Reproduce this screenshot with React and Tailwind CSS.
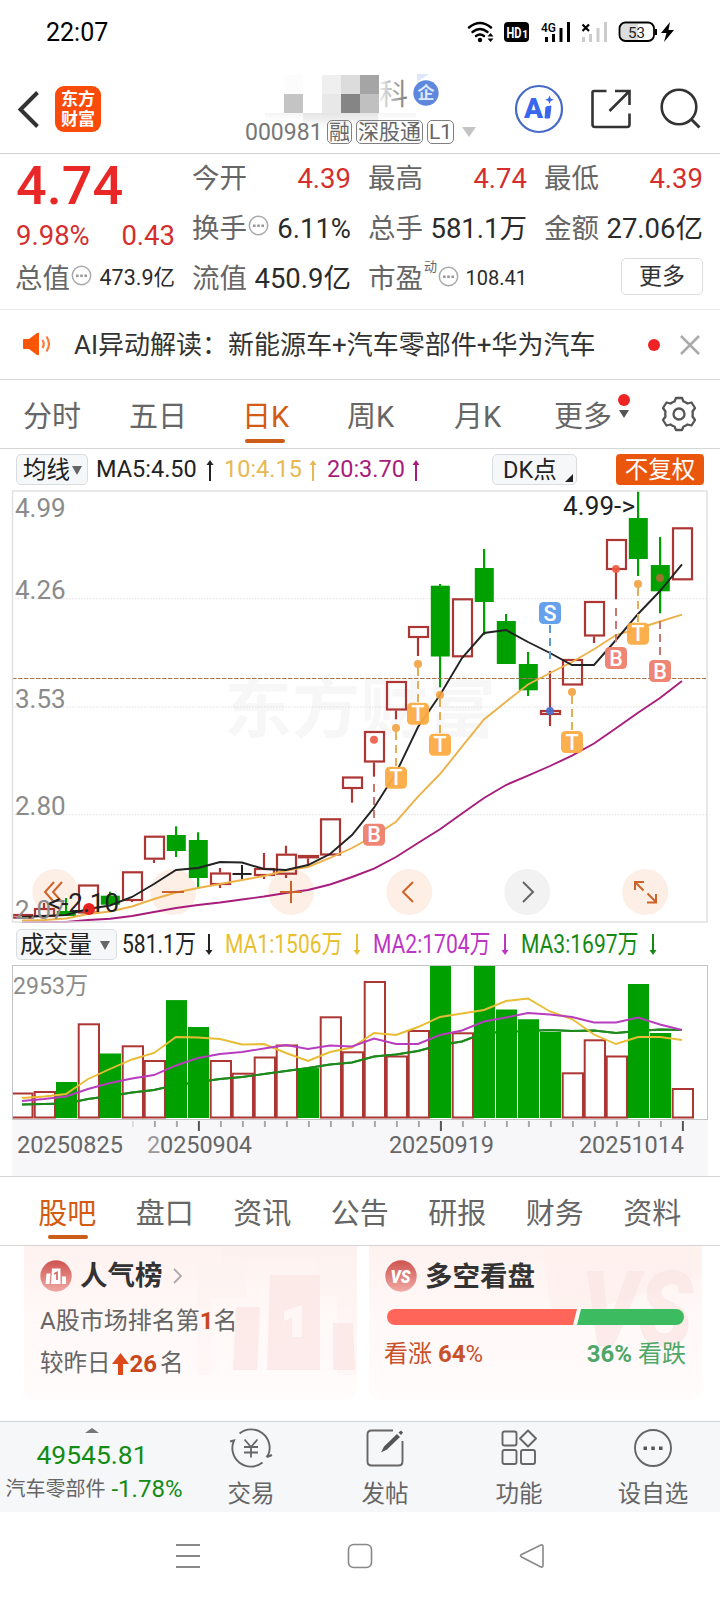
const UP = '#ac3633'
const DOWN = '#00a000'

const x = (i) => 22 + i * 22
const toPoints = (pts) => pts.map(([i, y]) => `${x(i)},${y}`).join(' ')

// [kind, body top, body bottom, wick top, wick bottom]
const CANDLES = [
  ['up', 914, 918.7, 914, 918.7], ['up', 908, 917, 903, 917], ['down', 911, 916, 898, 916],
  ['up', 884.5, 913.5, 884.5, 913.5], ['down', 895.7, 904.7, 891.7, 904.7], ['up', 871.3, 901, 871.3, 902],
  ['up', 835.7, 859.7, 835.7, 863], ['down', 835, 851, 826.3, 857], ['down', 840, 878, 832.3, 888],
  ['up', 872.5, 885, 868, 888], ['flat', 874, 874, 865, 879], ['up', 868, 876, 853, 879],
  ['up', 853.7, 874.7, 845.7, 878], ['up', 855, 858.3, 855, 865.7], ['up', 818.3, 855.5, 818.3, 855.5],
  ['up', 776.5, 789, 776.5, 802.7], ['up', 731, 762.5, 731, 776.7], ['up', 681, 710.5, 681, 719.3],
  ['up', 626, 638, 626, 656], ['down', 585.7, 656.5, 584, 687.3], ['up', 598.3, 657.3, 598.3, 657.3],
  ['down', 568, 602, 549, 635], ['down', 621, 664, 614, 664], ['down', 664, 690.3, 652, 696],
  ['up', 710, 715, 671, 726], ['up', 659, 685.5, 659, 685.5], ['up', 601, 636.5, 601, 643],
  ['up', 539, 570, 539, 599.3], ['down', 518, 559, 491, 576], ['down', 565, 591.3, 537, 613.3],
  ['up', 527.3, 580.3, 527.3, 580.3],
]

const MA5 = [[0, 917], [1, 916], [2, 915], [3, 909], [4, 905.5], [5, 897], [6, 884], [7, 870], [8, 868], [9, 862], [10, 862.5], [11, 869], [12, 870], [13, 865], [14, 854], [15, 835], [16, 807.7], [17, 773], [18, 727], [19, 695], [20, 658], [21, 633], [22, 630], [23, 642], [24, 653], [25, 665], [26, 665], [27, 640], [28, 614], [29, 591], [30, 564.3]]
const MA10 = [[0, 920.5], [1, 920], [2, 918.5], [3, 914], [4, 911.5], [5, 906.5], [6, 899], [7, 892.5], [8, 888], [9, 884], [10, 880], [11, 876], [12, 870.5], [13, 867], [14, 858], [15, 848], [16, 836], [17, 821.7], [18, 796.7], [19, 774], [20, 746.7], [21, 719.5], [22, 701.7], [23, 684.5], [24, 673], [25, 662], [26, 649.3], [27, 635], [28, 628.5], [29, 621.5], [30, 614.7]]
const MA20 = [[0, 922], [2, 922], [3, 920], [4, 918.7], [5, 916], [6, 912], [7, 908], [8, 905], [9, 902.5], [10, 899.5], [11, 896.5], [12, 893], [13, 890], [14, 884.5], [15, 877], [16, 868.7], [17, 857], [18, 843], [19, 829.3], [20, 813.5], [21, 798], [22, 785], [23, 775.7], [24, 766], [25, 755.7], [26, 743.5], [27, 728.3], [28, 712.7], [29, 698], [30, 681]]

// dot is the candle mark, from/to the dashed leader, y the badge centre
const SIGNALS = [
  { i: 16, t: 'B', dot: 739.7, from: 784, to: 823, y: 834.7 },
  { i: 17, t: 'T', dot: 728, from: 732, to: 766, y: 777.7 },
  { i: 18, t: 'T', dot: 664, from: 668, to: 702, y: 713.7 },
  { i: 19, t: 'T', dot: 695, from: 699, to: 733, y: 744.7 },
  { i: 24, t: 'S', dot: 711, from: 625, to: 663, y: 613 },
  { i: 25, t: 'T', dot: 692, from: 696, to: 730, y: 742 },
  { i: 27, t: 'B', dot: 569, from: 608, to: 647, y: 658 },
  { i: 28, t: 'T', dot: 584, from: 588, to: 622, y: 633.7 },
  { i: 29, t: 'B', dot: 578, from: 621, to: 660, y: 671 },
]
const SIGNAL_COLORS = { B: '#ee7f6c', T: '#fbab43', S: '#5f9cea' }
const LEADER_COLORS = { B: '#c9776f', T: '#e3ae55', S: '#5b9bd0' }
const DOT_COLORS = { B: '#ec5a44', T: '#f2a03c', S: '#4670d0' }

// [kind, top]
const VOLUMES = [
  ['up', 1092.5], ['up', 1091], ['down', 1082], ['up', 1023.3], ['down', 1053.7], ['up', 1045.3],
  ['up', 1060], ['down', 1000.3], ['down', 1027], ['up', 1060], ['up', 1072.7], ['up', 1056.5],
  ['up', 1044.5], ['down', 1068.3], ['up', 1016.3], ['up', 1051.3], ['up', 981], ['up', 1055.5],
  ['up', 1030], ['down', 966], ['up', 1032.3], ['down', 966], ['down', 1009.7], ['down', 1019.5],
  ['down', 1032], ['up', 1072.3], ['up', 1039.3], ['up', 1055.5], ['down', 984], ['down', 1033], ['up', 1088],
]
const VOL1 = [[0, 1098], [1, 1096.5], [2, 1094], [3, 1079], [4, 1069], [5, 1059.5], [6, 1053], [7, 1037], [8, 1037.5], [9, 1039], [10, 1044.5], [11, 1044], [12, 1053], [13, 1061], [14, 1052], [15, 1047.5], [16, 1033], [17, 1035], [18, 1027], [19, 1017], [20, 1013.5], [21, 1010], [22, 1001], [23, 998.5], [24, 1011.5], [25, 1019], [26, 1034.5], [27, 1044], [28, 1037], [29, 1037], [30, 1040]]
const VOL2 = [[0, 1101], [1, 1099], [2, 1096.5], [3, 1089], [4, 1083], [5, 1078.5], [6, 1075], [7, 1065.5], [8, 1058], [9, 1054], [10, 1052], [11, 1048.5], [12, 1045], [13, 1049], [14, 1045.5], [15, 1046.5], [16, 1038.5], [17, 1044], [18, 1044], [19, 1035], [20, 1030.5], [21, 1021.5], [22, 1017.5], [23, 1013], [24, 1014.5], [25, 1017], [26, 1022.5], [27, 1022.5], [28, 1017.5], [29, 1024.5], [30, 1030]]
const VOL3 = [[0, 1104.5], [2, 1103.5], [3, 1099], [4, 1096], [5, 1092.5], [6, 1090], [7, 1085], [8, 1082], [9, 1079], [10, 1077], [11, 1074], [12, 1071], [13, 1068], [14, 1064.5], [15, 1062.5], [16, 1056.5], [17, 1054.5], [18, 1051], [19, 1045], [20, 1041.5], [21, 1033], [23, 1031], [24, 1030], [25, 1031], [26, 1030.5], [27, 1033], [28, 1031], [29, 1029.5], [30, 1030]]

function StatusBar() {
  return (
    <div className="flex h-[62px] items-center justify-between pl-[46px] pr-[44px] pt-0.5">
      <span className="text-[25px] leading-none text-black">22:07</span>
      <svg width="212" height="28" viewBox="464 18 212 28" fill="none">
        <g stroke="#000" strokeWidth="2.4" strokeLinecap="round">
          <path d="M469 27.500q11-9 22 0" />
          <path d="M472.500 32q7.500-6 15 0" />
          <path d="M476 36q4-3 8 0" />
        </g>
        <circle cx="480" cy="40" r="2.200" fill="#000" />
        <path d="M487.500 36.500l3-3.500 3 3.500zM487.500 38.500l3 3.500 3-3.500z" fill="#000" />
        <rect x="504" y="22" width="25" height="20" rx="4" fill="#000" />
        <text x="506.500" y="37.500" fontSize="15" fontWeight="700" fill="#fff" textLength="15" lengthAdjust="spacingAndGlyphs">HD</text>
        <text x="522" y="37.500" fontSize="11" fontWeight="700" fill="#fff">1</text>
        <text x="541" y="32" fontSize="13" fontWeight="500" fill="#000" textLength="15" lengthAdjust="spacingAndGlyphs">4G</text>
        <path d="M546.500 37v5M553.500 34v8M561 28v14M568.500 22v20" stroke="#000" strokeWidth="3" />
        <path d="M582.500 24.500l6.500 6.500m0-6.500l-6.500 6.500" stroke="#000" strokeWidth="2.200" />
        <path d="M583.500 37v5M590.500 34v8M598 28v14M605.500 22v20" stroke="#ccc" strokeWidth="3" />
        <path d="M638 24h-13q-5 0-5 5v6q0 5 5 5h13z" fill="#ddd" />
        <rect x="619.500" y="22.500" width="34.500" height="18.500" rx="6" stroke="#000" strokeWidth="1.800" />
        <path d="M656 29v6" stroke="#000" strokeWidth="2" />
        <text x="628" y="37.500" fontSize="15.500" fill="#222" textLength="17" lengthAdjust="spacingAndGlyphs">53</text>
        <path d="M670 22l-9 11h5.500l-2.500 9 10-12h-5.500z" fill="#000" />
      </svg>
    </div>
  )
}

function Tag({ children }) {
  return (
    <span className="flex h-[24px] items-center justify-center rounded-[5px] border border-[#808080] px-px text-[21px] leading-none text-[#666]">
      {children}
    </span>
  )
}

function Header() {
  return (
    <div className="flex h-[92px] border-b border-[#d2d2d2]">
      <div className="flex w-[245px] items-start gap-[14px] pl-[17px] pt-6">
        <svg width="24" height="46" viewBox="0 0 24 46" fill="none">
          <path d="M20.500 6.500L3.500 23.500l17 17" stroke="#333" strokeWidth="4" />
        </svg>
        <div className="flex size-[46px] flex-col items-center justify-center rounded-[9px] bg-[#fa4b0a] text-[17px] font-bold leading-[20px] text-white">
          <span>东方</span>
          <span>财富</span>
        </div>
      </div>
      <div className="relative w-[256px]">
        <svg className="absolute -left-[3px] top-[10px]" width="260" height="58" viewBox="242 72 260 58">
          <defs>
            <linearGradient id="fade" x1="0" y1="0" x2="0" y2="1">
              <stop offset="0" stopColor="#dedede" />
              <stop offset="1" stopColor="#fff" />
            </linearGradient>
            <linearGradient id="stroke" x1="0" y1="0" x2="1" y2="0">
              <stop offset="0" stopColor="#eee" />
              <stop offset="1" stopColor="#777" />
            </linearGradient>
          </defs>
          <rect x="303" y="113" width="75" height="16" fill="url(#fade)" opacity=".8" />
          <rect x="265" y="113" width="38" height="8" fill="url(#fade)" opacity=".3" />
          <rect x="378" y="113" width="38" height="7" fill="url(#fade)" opacity=".3" />
          <rect x="284" y="75" width="19" height="19" fill="#fcfcfc" />
          <rect x="322" y="75" width="19" height="19" fill="#efefef" />
          <rect x="341" y="75" width="19" height="19" fill="#dcdcdc" />
          <rect x="360" y="75" width="19" height="19" fill="#a5a5a5" />
          <rect x="284" y="94" width="19" height="19" fill="#c4c4c4" />
          <rect x="322" y="94" width="19" height="19" fill="#e8e8e8" />
          <rect x="341" y="94" width="19" height="19" fill="#858585" />
          <rect x="360" y="94" width="19" height="19" fill="#c0c0c0" />
          <text x="379" y="105" fontSize="29" fill="url(#stroke)">科</text>
          <circle cx="426" cy="93" r="12.700" fill="#5f87dc" />
          <path d="M417 74h12l-12 8z" fill="#dfe8fa" />
          <text x="417.500" y="99" fontSize="17" fontWeight="700" fill="#dfe9fc">企</text>
        </svg>
        <div className="relative flex items-center gap-1 pt-[58px]">
          <span className="w-[78px] text-[23px] leading-none text-[#777]">000981</span>
          <Tag>融</Tag>
          <Tag>深股通</Tag>
          <Tag>L1</Tag>
          <svg className="ml-1" width="14" height="10"><path d="M0 0h14l-7 10z" fill="#c4c4c4" /></svg>
        </div>
      </div>
      <div className="flex flex-1 items-start justify-end pr-[18px] pt-[22px]">
        <svg width="190" height="50" viewBox="512 84 190 50" fill="none">
          <circle cx="539" cy="109" r="23" stroke="#456ac6" strokeWidth="2.200" />
          <text x="524" y="118" fontSize="27" fontWeight="900" fill="#3a66ee" textLength="19" lengthAdjust="spacingAndGlyphs">A</text>
          <path d="M546 107l5-1-1.500 12h-4.500z" fill="#3a66ee" stroke="#3a66ee" />
          <path d="M549.500 95.500l1.200 3 3 1.200-3 1.200-1.200 3-1.200-3-3-1.200 3-1.200z" fill="#3a66ee" />
          <g stroke="#333" strokeWidth="2.600">
            <path d="M606.500 91h-12.500q-1.500 0-1.500 1.500v32q0 2.500 2.500 2.500h32q2.500 0 2.500-2.500v-11" />
            <path d="M615 91h14.500v14M629 91.500l-19.500 19.500" />
            <circle cx="679" cy="107" r="17.300" />
            <path d="M691 119l8.500 8.500" strokeWidth="3" />
          </g>
        </svg>
      </div>
    </div>
  )
}

function Info() {
  return (
    <svg width="21" height="21" viewBox="0 0 21 21" className="shrink-0">
      <circle cx="10.500" cy="10.500" r="9.200" fill="none" stroke="#aaa" strokeWidth="1.500" />
      <path d="M5 9.500h2.600v2.600H5zM9.200 9.500h2.600v2.600H9.200zM13.400 9.500H16v2.600h-2.600z" fill="#999" />
    </svg>
  )
}

function Quote({ label, value, red, info, small }) {
  return (
    <div className="flex h-[50px] items-center whitespace-nowrap leading-none">
      <span className="-ml-px pt-px text-[27.5px] text-[#666]">{label}</span>
      {info && <span className="-mt-1.5 ml-px"><Info /></span>}
      <span className={`ml-auto ${small ? 'text-[21.5px]' : 'pt-px text-[27.5px]'} ${red ? 'text-[#d42f2e]' : 'text-[#2b2b2b]'}`}>{value}</span>
    </div>
  )
}

function Quotes() {
  return (
    <div className="flex h-[156px] gap-[18px] border-b border-[#ebebeb] pl-4 pr-[17px]">
      <div className="w-[159px]">
        <div className="flex h-[62px] items-center text-[54px] font-medium leading-none text-[#ea2727]">
          <span className="pt-0.5">4.74</span>
        </div>
        <div className="flex h-[37px] items-center justify-between pt-0.5 text-[27.5px] leading-none text-[#d42f2e]">
          <span>9.98%</span>
          <span>0.43</span>
        </div>
        <Quote label="总值" value="473.9亿" info small />
      </div>
      <div className="-mt-px grid flex-1 grid-cols-3 content-start gap-x-[18px]">
        <Quote label="今开" value="4.39" red />
        <Quote label="最高" value="4.74" red />
        <Quote label="最低" value="4.39" red />
        <Quote label="换手" value="6.11%" info />
        <Quote label="总手" value="581.1万" />
        <Quote label="金额" value="27.06亿" />
        <Quote label="流值" value="450.9亿" />
        <div className="flex h-[50px] items-center leading-none">
          <span className="-ml-px pt-px text-[27.5px] text-[#666]">市盈</span>
          <span className="mb-6 ml-px text-[13px] text-[#666]">动</span>
          <span className="-mt-1 ml-px"><Info /></span>
          <span className="ml-auto text-[20px] text-[#2b2b2b]">108.41</span>
        </div>
        <div className="flex h-[50px] items-center justify-end">
          <span className="-mt-1 flex h-[37px] w-[82px] items-center justify-center rounded-[5px] border border-[#dcdcdc] text-[23px] leading-none text-[#333]">更多</span>
        </div>
      </div>
    </div>
  )
}

function News() {
  return (
    <div className="flex h-[70px] items-center border-b border-[#d6d6d6] pl-[22px] pr-5 text-[26px] leading-none text-[#333]">
      <svg className="-mt-0.5" width="32" height="26" viewBox="0 0 32 26">
        <path d="M1 9q0-1 1-1h5l8-6q2-1 2 1v20q0 2-2 1l-8-6H2q-1 0-1-1z" fill="#fb5607" />
        <path d="M20.500 9q2.500 4 0 8M24.500 5.500q5 7.500 0 15" stroke="#fb7a3a" strokeWidth="2.200" fill="none" />
      </svg>
      <span className="ml-5 whitespace-nowrap">AI异动解读：新能源车+汽车零部件+华为汽车</span>
      <span className="ml-auto size-[12px] rounded-full bg-[#ee2424]" />
      <svg className="ml-5" width="20" height="20"><path d="M1 1l18 18M19 1L1 19" stroke="#aaa" strokeWidth="2.500" /></svg>
    </div>
  )
}

function PeriodTabs() {
  return (
    <div className="flex h-[69px] border-b border-[#d6d6d6] pl-[23px] text-[29px] leading-none text-[#666]">
      <span className="w-[106px] pt-[23px]">分时</span>
      <span className="w-[113px] pt-[23px]">五日</span>
      <span className="relative w-[105px] pt-[23px] text-[#d45b12]">
        日K
        <i className="absolute left-[3px] top-[59px] h-1 w-10 rounded-sm bg-[#cd5c18]" />
      </span>
      <span className="w-[107px] pt-[23px]">周K</span>
      <span className="w-[100px] pt-[23px]">月K</span>
      <span className="relative w-[106px] pt-[23px]">
        更多
        <i className="absolute left-[64px] top-[14px] size-[12px] rounded-full bg-[#ee2424]" />
        <svg className="absolute left-[65px] top-[30px]" width="10" height="8"><path d="M0 0h10l-5 8z" fill="#555" /></svg>
      </span>
      <svg className="mt-[15px]" width="38" height="38" viewBox="-19 -19 38 38" fill="none" stroke="#555" strokeWidth="2.300" strokeLinejoin="round">
        <path d="M-4.500-12.500L-3-16H3L4.500-12.500Q6.500-12 8.500-10.500L12.500-11.500L16-6L13.500-2.500Q14 0 13.500 2.500L16 6L12.500 11.500L8.500 10.500Q6.500 12 4.500 12.500L3 16H-3L-4.500 12.500Q-6.500 12-8.500 10.500L-12.500 11.500L-16 6L-13.500 2.500Q-14 0-13.500-2.500L-16-6L-12.500-11.500L-8.500-10.500Q-6.500-12-4.500-12.500Z" />
        <circle r="5.500" />
      </svg>
    </div>
  )
}

function Arrow({ down, color }) {
  return (
    <svg width="8" height="21" viewBox="0 0 8 21" className={`shrink-0 ${down ? 'rotate-180' : ''}`}>
      <path d="M4 2v19" stroke={color} strokeWidth="2" />
      <path d="M4 0l3.500 5h-7z" fill={color} />
    </svg>
  )
}

function MaLegend() {
  return (
    <div className="flex h-[41px] items-start px-4 pt-[5px] text-[23.5px] leading-none">
      <div className="flex h-[31px] w-[72px] items-center gap-0.5 rounded-[5px] border border-[#dadde0] bg-[#f6f7f9] pl-1.5 pt-0.5 text-[#222]">
        均线
        <svg width="10" height="9"><path d="M0 0h10l-5 9z" fill="#666" /></svg>
      </div>
      <div className="flex h-[31px] w-[126px] items-center justify-between pl-2 pt-px text-[#222]">
        MA5:4.50<Arrow color="#222" />
      </div>
      <div className="flex h-[31px] w-[103px] items-center justify-between pl-2.5 pt-px text-[#e6b954]">
        10:4.15<Arrow color="#e6b954" />
      </div>
      <div className="flex h-[31px] w-[103px] items-center justify-between pl-2.5 pt-px text-[#a81c7c]">
        20:3.70<Arrow color="#a81c7c" />
      </div>
      <div className="ml-auto flex h-[31px] w-[85px] items-end rounded-[5px] border border-[#dadde0] bg-[#f6f7f9] pb-[2px] pl-2.5 pr-[3px] text-[#222]">
        DK点
        <svg className="ml-auto" width="8" height="8"><path d="M8 0v8H0z" fill="#222" /></svg>
      </div>
      <div className="ml-[39px] flex h-[31px] w-[88px] items-center justify-center rounded-[4px] bg-[#e9560c] pt-0.5 text-white">不复权</div>
    </div>
  )
}

function Candle({ i, c }) {
  const [kind, top, bottom, high, low] = c
  const cx = x(i) + (kind === 'down' ? 0.3 : 0.5)
  if (kind === 'flat') {
    return <path d={`M${cx - 10} ${top}h19M${cx - 0.5} ${high}v${low - high}`} stroke="#222" strokeWidth="2" />
  }
  if (kind === 'down') {
    return (
      <g fill={DOWN}>
        <rect x={cx - 9.500} y={top} width="19" height={bottom - top} />
        <rect x={cx - 1.300} y={high} width="2.200" height={low - high} />
      </g>
    )
  }
  return (
    <g stroke={UP} strokeWidth="2.200" fill="none">
      <path d={`M${cx - 0.5} ${high}V${top}M${cx - 0.5} ${bottom}V${low}`} />
      <rect x={cx - 9.500} y={top + 1} width="19" height={Math.max(bottom - top - 2, 1)} />
    </g>
  )
}

const ROUND = [
  [55, '#fdeee6', 'M54 882l-9 10 9 10M62 882l-9 10 9 10'],
  [173, '#fdeee6', 'M162 892h22'],
  [291, '#fdeee6', 'M280 892h22M291 881v22'],
  [409, '#fdeee6', 'M413 882l-10 10 10 10'],
  [527, '#f2f2f3', 'M523 882l10 10-10 10'],
  [645, '#fdeee6', 'M635 890v-8h9M635 882l8.500 8.500M656 894v8.500h-9M656 902l-8.500-8.500'],
]

function PriceChart() {
  return (
    <svg className="block" width="720" height="433" viewBox="0 490 720 433" fill="none">
      <text x="224" y="732" fontSize="66" fontWeight="700" fill="#f7f7f8" textLength="272" lengthAdjust="spacingAndGlyphs">东方财富</text>
      <g stroke="#dedede" strokeDasharray="1.500 1.500">
        <path d="M12 598.700h695M12 707h695M12 814.700h695" />
      </g>
      {ROUND.map(([cx, bg]) => <circle key={cx} cx={cx + 0.3} cy="892" r="23" fill={bg} />)}
      {CANDLES.map((c, i) => <Candle key={i} i={i} c={c} />)}
      <path d="M12 678.500h695" stroke="#a57650" strokeWidth="1.200" strokeDasharray="4.500 1.500" />
      <polyline points={toPoints(MA20)} stroke="#a81c7c" strokeWidth="1.900" />
      <polyline points={toPoints(MA10)} stroke="#ecb24a" strokeWidth="1.900" />
      <polyline points={toPoints(MA5)} stroke="#222" strokeWidth="1.900" />
      {SIGNALS.map(s => (
        <g key={s.i}>
          <path d={`M${x(s.i)} ${s.from}V${s.to}`} stroke={LEADER_COLORS[s.t]} strokeWidth="2" strokeDasharray="8 5" />
          <circle cx={x(s.i)} cy={s.dot} r="4" fill={DOT_COLORS[s.t]} opacity={s.i === 29 ? 0.65 : 0.9} />
          <rect x={x(s.i) - 11} y={s.y - 11} width="22" height="22" rx="4.500" fill={SIGNAL_COLORS[s.t]} opacity=".95" />
          <text x={x(s.i)} y={s.y + 7.500} fontSize="21.500" fontWeight="500" fill="#fff" textAnchor="middle">{s.t}</text>
        </g>
      ))}
      {ROUND.map(([cx, , d]) => <path key={cx} d={d} stroke={cx === 527 ? '#666' : '#cc6429'} strokeWidth="2" />)}
      <circle cx="89" cy="909" r="6" fill="#e62222" />
      <g fontSize="26" fill="#8b8b8b">
        <text x="15" y="517">4.99</text>
        <text x="15" y="599">4.26</text>
        <text x="15" y="707.500">3.53</text>
        <text x="15" y="815">2.80</text>
        <text x="15" y="918.500">2.07</text>
      </g>
      <g fontSize="26" fill="#222">
        <text x="563" y="515" textLength="72">4.99-&gt;</text>
        <text x="48" y="911.500" textLength="71">&lt;-2.10</text>
      </g>
      <rect x="12.500" y="491" width="694.500" height="431" stroke="#e1e1e1" strokeWidth="1.500" />
    </svg>
  )
}

function VolumeLegend() {
  return (
    <div className="flex h-[42px] items-center whitespace-nowrap pl-4 text-[26px] leading-none">
      <div className="flex h-[31px] w-[101px] items-center rounded-[5px] border border-[#dadde0] bg-[#f6f7f9] pl-[3px] pt-0.5 text-[24px] text-[#222]">
        成交量
        <svg className="ml-2" width="10" height="9"><path d="M0 0h10l-5 9z" fill="#666" /></svg>
      </div>
      <div className="ml-[5px] flex w-[91px] items-center justify-between text-[#222]">
        <span className="w-[74px] origin-left scale-x-[.81]">581.1万</span><Arrow down color="#222" />
      </div>
      <div className="ml-[12px] flex w-[136px] items-center justify-between text-[#e8c030]">
        <span className="w-[117px] origin-left scale-x-[.81]">MA1:1506万</span><Arrow down color="#e8c030" />
      </div>
      <div className="ml-[12px] flex w-[136px] items-center justify-between text-[#bd35c4]">
        <span className="w-[117px] origin-left scale-x-[.81]">MA2:1704万</span><Arrow down color="#bd35c4" />
      </div>
      <div className="ml-[12px] flex w-[136px] items-center justify-between text-[#148a14]">
        <span className="w-[117px] origin-left scale-x-[.81]">MA3:1697万</span><Arrow down color="#148a14" />
      </div>
    </div>
  )
}

function VolumeBar({ i, kind, top }) {
  if (kind === 'down') return <rect x={x(i) - 10} y={top} width="21" height={1118 - top} fill={DOWN} />
  // the first bar runs out of the frame on its left side
  if (i === 0) return <path d={`M13 ${top + 1}H32.500V1117.500H13`} stroke={UP} strokeWidth="2" />
  return <rect x={x(i) - 9.300} y={top + 1} width="20.300" height={1116.500 - top} stroke={UP} strokeWidth="2" />
}

function VolumeChart() {
  const ticks = Array.from({ length: 26 }, (_, k) => k + 5)
  return (
    <svg className="block" width="720" height="211" viewBox="0 965 720 211" fill="none">
      <rect x="12" y="1119.500" width="696" height="58" fill="#f7f7fa" />
      <rect x="12.500" y="965.500" width="695" height="154" stroke="#c4c4c4" />
      <polyline points={toPoints(VOL3)} stroke="#1e8a1e" strokeWidth="1.900" />
      {VOLUMES.map(([kind, top], i) => <VolumeBar key={i} i={i} kind={kind} top={top} />)}
      <polyline points={toPoints(VOL3)} stroke="#1e8a1e" strokeWidth="1.900" />
      <g fill={DOWN}>
        {VOLUMES.map(([kind, top], i) => kind === 'down' && (
          <rect key={i} x={x(i) - 10} y={top} width="21" height={1118 - top} />
        ))}
      </g>
      <polyline points={toPoints(VOL1)} stroke="#e8bd34" strokeWidth="1.900" />
      <polyline points={toPoints(VOL2)} stroke="#b83cbe" strokeWidth="1.900" />
      {ticks.map(k => {
        const major = k === 8 || k === 19 || k === 30
        return <path key={k} d={`M${x(k) + 0.9} 1121v${major ? 10 : 6}`} stroke={major ? '#555' : k === 5 ? '#ddd' : '#a8a8a8'} strokeWidth="2" />
      })}
      <text x="13" y="994" fontSize="24" fill="#8b8b8b" textLength="75" lengthAdjust="spacingAndGlyphs">2953万</text>
      <g fontSize="23.500" fill="#666">
        <text x="17" y="1152.500" textLength="106">20250825</text>
        <text x="147" y="1152.500" textLength="105"><tspan fill="#999">2</tspan>0250904</text>
        <text x="389" y="1152.500" textLength="105">20250919</text>
        <text x="579" y="1152.500" textLength="105">20251014</text>
      </g>
    </svg>
  )
}

const SECTIONS = ['股吧', '盘口', '资讯', '公告', '研报', '财务', '资料']

function SectionTabs() {
  return (
    <div className="flex h-[70px] border-y border-[#d4d4d4] pl-[18.5px] text-[29px] leading-none text-[#666]">
      {SECTIONS.map((s, i) => (
        <span key={s} className={`relative flex w-[97.5px] justify-center pt-[23px] ${i === 0 ? 'text-[#d45b12]' : ''}`}>
          {s}
          {i === 0 && <i className="absolute left-[29px] top-[58px] h-1 w-10 rounded-sm bg-[#cd5c18]" />}
        </span>
      ))}
    </div>
  )
}

function Cards() {
  return (
    <div className="flex h-[175px] gap-3 pl-6">
      <div className="relative h-[154px] w-[333px] rounded-b-[12px] bg-linear-to-b from-[#fef2f0] via-[#fff9f8] to-[#fffcfb] pl-4 text-[24px] leading-none text-[#666]">
        <svg className="absolute right-0 top-0" width="160" height="130" viewBox="0 0 160 130">
          <path d="M0 18h25V1h135v128h-20V50h-20V12H50v40H14v77H0z" fill="#fdf1ef" opacity=".35" />
          <path d="M73 29h50v95H70zM39 61h24l-3 63H36zM136 77h20l2 47h-22z" fill="#fbe6e4" opacity=".75" />
          <path d="M87 65l18-6v32h-10V72l-8 3z" fill="#fff7f5" />
        </svg>
        <div className="relative flex h-[59px] items-center">
          <svg width="32" height="32" viewBox="0 0 32 32">
            <defs>
              <linearGradient id="badge" x1="0" y1="0" x2="0" y2="1">
                <stop offset="0" stopColor="#cf5450" />
                <stop offset="1" stopColor="#f0a9a4" />
              </linearGradient>
            </defs>
            <circle cx="16" cy="16" r="15.700" fill="url(#badge)" />
            <path d="M12 8.500h8.500V24H11zM6.500 13.500h4L9.500 24h-4zM22 16.500h4V24h-4z" fill="#fff" />
            <path d="M14 14l3-1.500V20" stroke="#d4706b" strokeWidth="1.800" fill="none" />
          </svg>
          <span className="ml-2 text-[27.5px] font-bold text-[#333]">人气榜</span>
          <svg className="ml-2.5" width="10" height="16" fill="none"><path d="M1 1l7 7-7 7" stroke="#aaa" strokeWidth="1.800" /></svg>
        </div>
        <div className="relative mt-1 flex h-[24px] items-center whitespace-nowrap">
          A股市场排名第<b className="text-[#c8481e]">1</b>名
        </div>
        <div className="relative mt-[19px] flex h-[24px] items-center whitespace-nowrap text-[23.5px]">
          较昨日
          <svg className="mx-px" width="17" height="22"><path d="M8.500 0L17 11h-6v11H6V11H0z" fill="#dc4a1c" /></svg>
          <b className="text-[24px] text-[#c8481e]">26</b>
          <span className="ml-[3px]">名</span>
        </div>
      </div>
      <div className="relative h-[154px] w-[333px] rounded-b-[12px] bg-linear-to-b from-[#fef2f0] via-[#fff9f8] to-[#fffcfb] pl-4 pr-[17px] text-[24px] leading-none">
        <svg className="absolute right-0 top-0" width="165" height="154" viewBox="0 0 165 154">
          <path d="M5 0h160v30L60 62H14z" fill="#fef0ee" opacity=".8" />
          <text x="44" y="100" fontSize="106" fontWeight="900" fontStyle="italic" fill="#fbe6e4" opacity=".7" textLength="112" lengthAdjust="spacingAndGlyphs">VS</text>
        </svg>
        <div className="relative flex h-[59px] items-center">
          <svg width="32" height="32" viewBox="0 0 32 32">
            <circle cx="16" cy="16" r="15.700" fill="url(#badge)" />
            <text x="5.500" y="22.500" fontSize="18" fontWeight="900" fontStyle="italic" fill="#fff" textLength="20" lengthAdjust="spacingAndGlyphs">VS</text>
          </svg>
          <span className="ml-2 pt-0.5 text-[27.5px] font-bold text-[#333]">多空看盘</span>
        </div>
        <svg className="relative mt-1 block" width="300" height="16" viewBox="0 0 300 16">
          <path d="M10 0h182l-4 16H10a8 8 0 0 1 0-16z" fill="#ff6558" />
          <path d="M196 0h95a8 8 0 0 1 0 16h-99z" fill="#3dbb60" />
        </svg>
        <div className="relative -mx-px mt-[17px] flex h-[24px] items-center justify-between whitespace-nowrap">
          <span className="text-[#c8512c]">看涨 <b>64</b>%</span>
          <span className="text-[#4ea768]"><b>36%</b> 看跌</span>
        </div>
      </div>
    </div>
  )
}

function Action({ label, children }) {
  return (
    <div className="flex w-[134px] flex-col items-center pt-[5px] text-[23.5px] leading-none text-[#666]">
      <svg width="44" height="42" viewBox="-22 -21 44 42" fill="none" stroke="#666" strokeWidth="1.900">{children}</svg>
      <span className="mt-[14px]">{label}</span>
    </div>
  )
}

function BottomBar() {
  return (
    <div className="flex h-[91px] border-t border-[#d2d5d8] bg-[#f6f7f9]">
      <div className="flex w-[184px] flex-col items-center leading-none">
        <svg className="mt-[6px]" width="14" height="5"><path d="M0 5l7-5 7 5z" fill="#777" /></svg>
        <span className="mt-[9px] text-[26.5px] text-[#148c14]">49545.81</span>
        <span className="ml-1 mt-2 flex items-center gap-1.5 whitespace-nowrap text-[20px] text-[#666]">
          汽车零部件<span className="text-[24px] text-[#148c14]">-1.78%</span>
        </span>
      </div>
      <Action label="交易">
        <path d="M-11.500-14.500A18.500 18.500 0 0 1 17 7.500l-1 2M18 5.500l-2.500 3.500M16 9l5-2M11.500 14.500A18.500 18.500 0 0 1-17-7.500l-4 1" />
        <path d="M-6.500-8.500L0-1l6.500-7.500M0-1v10.500M-7-1H7M-7 4.500H7" strokeWidth="1.800" />
      </Action>
      <Action label="发帖">
        <path d="M8-17.500h-21.500q-4 0-4 4v27q0 4 4 4h27q4 0 4-4V-7" />
        <path d="M-4 4.500l3-6L12-14l3 3L2 1.500zM13.500-15.500l2.500-2 2 2-2 2.500z" fill="#555" stroke="none" />
      </Action>
      <Action label="功能">
        <rect x="-16.500" y="-16.500" width="14" height="14" rx="2" />
        <rect x="-16.500" y="2" width="14" height="14" rx="2" />
        <rect x="2" y="2" width="14" height="14" rx="2" />
        <path d="M9-17.500l8 8-8 8-8-8z" strokeLinejoin="round" />
      </Action>
      <Action label="设自选">
        <circle r="18" />
        <path d="M-9.500-1.500h3.500v3.500h-3.500zM-1.700-1.500h3.500v3.500h-3.500zM6-1.500h3.500v3.500H6z" fill="#555" stroke="none" />
      </Action>
    </div>
  )
}

function NavBar() {
  return (
    <div className="flex h-[88px] items-center justify-between px-[175px]">
      <svg width="26" height="26" fill="none" stroke="#888" strokeWidth="1.800"><path d="M1 2h24M1 13h24M1 24h24" /></svg>
      <svg width="26" height="26" fill="none" stroke="#888" strokeWidth="1.600"><rect x="1.500" y="1.500" width="23" height="23" rx="5" /></svg>
      <svg width="26" height="26" fill="none" stroke="#888" strokeWidth="1.600" strokeLinejoin="round"><path d="M2.500 11.500L22 2q2-.5 2 1.500v19q0 2-2 1.500L2.500 14q-2-1.200 0-2.500z" /></svg>
    </div>
  )
}

export default function App() {
  return (
    <div className="h-[1600px] w-[720px] overflow-hidden bg-white font-['Roboto','Noto_Sans_CJK_SC',sans-serif]">
      <StatusBar />
      <Header />
      <Quotes />
      <News />
      <PeriodTabs />
      <MaLegend />
      <PriceChart />
      <VolumeLegend />
      <VolumeChart />
      <SectionTabs />
      <Cards />
      <BottomBar />
      <NavBar />
    </div>
  )
}
